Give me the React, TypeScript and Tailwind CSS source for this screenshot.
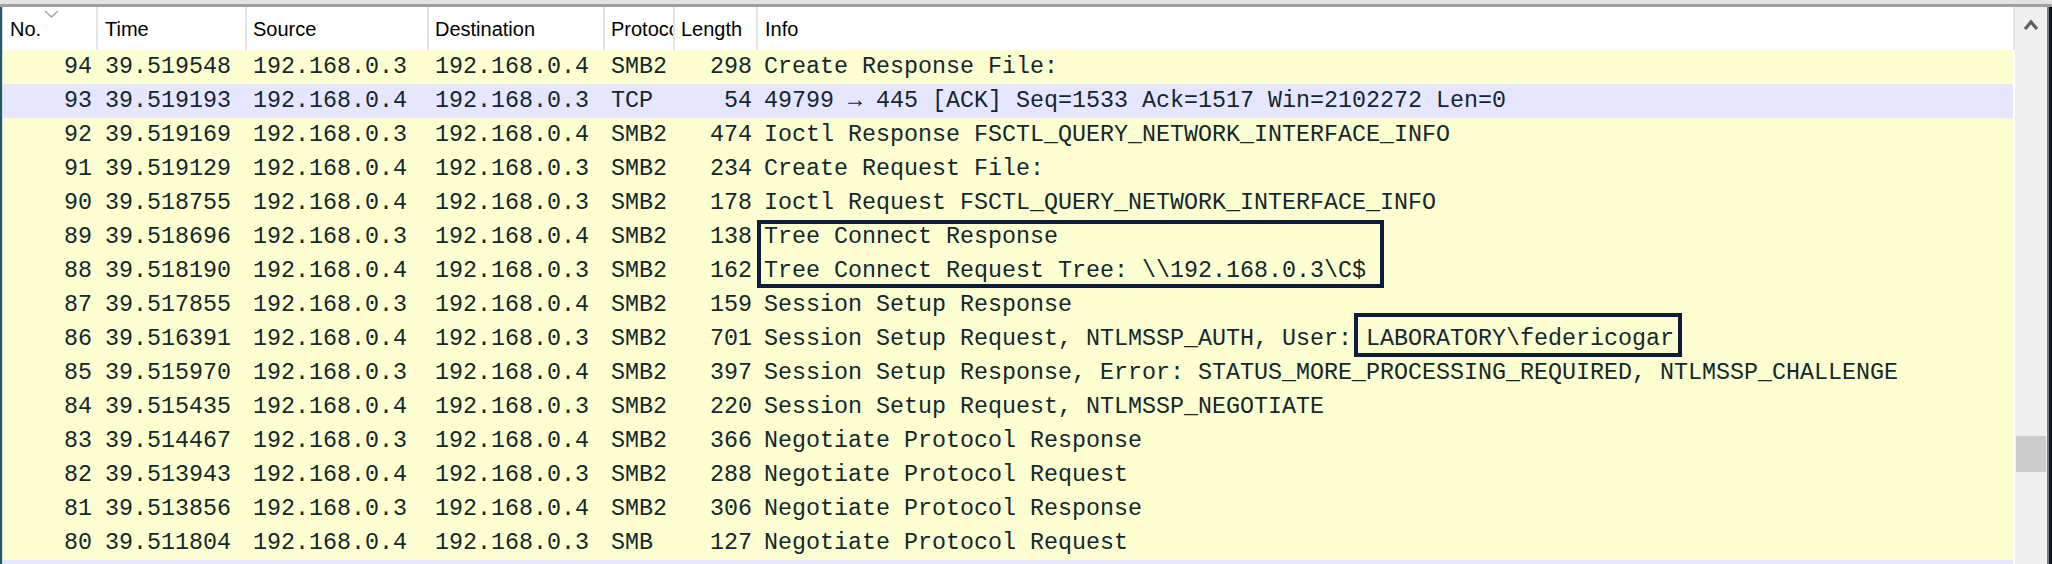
import React from "react";

type Row = { no: string; time: string; src: string; dst: string; proto: string; len: string; info: string; tcp?: boolean };

const rows: Row[] = [
  { no: "94", time: "39.519548", src: "192.168.0.3", dst: "192.168.0.4", proto: "SMB2", len: "298", info: "Create Response File:" },
  { no: "93", time: "39.519193", src: "192.168.0.4", dst: "192.168.0.3", proto: "TCP", len: "54", info: "49799 \u2192 445 [ACK] Seq=1533 Ack=1517 Win=2102272 Len=0", tcp: true },
  { no: "92", time: "39.519169", src: "192.168.0.3", dst: "192.168.0.4", proto: "SMB2", len: "474", info: "Ioctl Response FSCTL_QUERY_NETWORK_INTERFACE_INFO" },
  { no: "91", time: "39.519129", src: "192.168.0.4", dst: "192.168.0.3", proto: "SMB2", len: "234", info: "Create Request File:" },
  { no: "90", time: "39.518755", src: "192.168.0.4", dst: "192.168.0.3", proto: "SMB2", len: "178", info: "Ioctl Request FSCTL_QUERY_NETWORK_INTERFACE_INFO" },
  { no: "89", time: "39.518696", src: "192.168.0.3", dst: "192.168.0.4", proto: "SMB2", len: "138", info: "Tree Connect Response" },
  { no: "88", time: "39.518190", src: "192.168.0.4", dst: "192.168.0.3", proto: "SMB2", len: "162", info: "Tree Connect Request Tree: \\\\192.168.0.3\\C$" },
  { no: "87", time: "39.517855", src: "192.168.0.3", dst: "192.168.0.4", proto: "SMB2", len: "159", info: "Session Setup Response" },
  { no: "86", time: "39.516391", src: "192.168.0.4", dst: "192.168.0.3", proto: "SMB2", len: "701", info: "Session Setup Request, NTLMSSP_AUTH, User: LABORATORY\\federicogar" },
  { no: "85", time: "39.515970", src: "192.168.0.3", dst: "192.168.0.4", proto: "SMB2", len: "397", info: "Session Setup Response, Error: STATUS_MORE_PROCESSING_REQUIRED, NTLMSSP_CHALLENGE" },
  { no: "84", time: "39.515435", src: "192.168.0.4", dst: "192.168.0.3", proto: "SMB2", len: "220", info: "Session Setup Request, NTLMSSP_NEGOTIATE" },
  { no: "83", time: "39.514467", src: "192.168.0.3", dst: "192.168.0.4", proto: "SMB2", len: "366", info: "Negotiate Protocol Response" },
  { no: "82", time: "39.513943", src: "192.168.0.4", dst: "192.168.0.3", proto: "SMB2", len: "288", info: "Negotiate Protocol Request" },
  { no: "81", time: "39.513856", src: "192.168.0.3", dst: "192.168.0.4", proto: "SMB2", len: "306", info: "Negotiate Protocol Response" },
  { no: "80", time: "39.511804", src: "192.168.0.4", dst: "192.168.0.3", proto: "SMB", len: "127", info: "Negotiate Protocol Request" },
];

const gridCols = "grid grid-cols-[95px_149px_182px_176px_70px_83px_1fr]";

export default function App() {
  return (
    <div className="relative w-[2052px] h-[564px] overflow-hidden flex flex-col bg-white">
      <div className="h-[4px] bg-[#e3e3e3]" />
      <div className="h-[3px] bg-[#a0a0a0]" />
      <div className="flex flex-1 min-h-0">
        <div className="w-[2px] bg-[#1e5b6b]" />
        <div className="w-[1px] bg-[#d9d9d9]" />
        {/* table */}
        <div className="w-[2010px] flex flex-col min-h-0">
          <div className={`${gridCols} h-[43px] bg-white text-black text-[20px] font-['Liberation_Sans',Arial,sans-serif]`}>
            <div className="relative flex items-center pl-[7px] border-r-2 border-[#e3e3e3]">
              No.
              <svg className="absolute left-[41px] top-[3px]" width="15" height="8" viewBox="0 0 15 8">
                <polyline points="1,1 7.5,7 14,1" fill="none" stroke="#a5a5a5" strokeWidth="1.4" />
              </svg>
            </div>
            <div className="flex items-center pl-[7px] border-r-2 border-[#e3e3e3]">Time</div>
            <div className="flex items-center pl-[6px] border-r-2 border-[#e3e3e3]">Source</div>
            <div className="flex items-center pl-[6px] border-r-2 border-[#e3e3e3]">Destination</div>
            <div className="flex items-center pl-[6px] border-r-2 border-[#e3e3e3] overflow-hidden whitespace-nowrap">Protocol</div>
            <div className="flex items-center pl-[6px] border-r-2 border-[#e3e3e3]">Length</div>
            <div className="flex items-center pl-[7px]">Info</div>
          </div>
          <div className="flex-1 min-h-0 overflow-hidden flex flex-col font-['Liberation_Mono','DejaVu_Sans_Mono',monospace] text-[23.33px] text-[#12272e]">
            {rows.map((r) => (
              <div
                key={r.no}
                className={`${gridCols} h-[34px] shrink-0 items-center whitespace-pre ${r.tcp ? "bg-[#e7e6ff]" : "bg-[#feffd0]"}`}
              >
                <div className="text-right pr-[6px]">{r.no}</div>
                <div className="pl-[7px]">{r.time}</div>
                <div className="pl-[6px]">{r.src}</div>
                <div className="pl-[6px]">{r.dst}</div>
                <div className="pl-[6px]">{r.proto}</div>
                <div className="text-right pr-[6px]">{r.len}</div>
                <div className="pl-[6px] overflow-hidden">{r.info}</div>
              </div>
            ))}
            <div className="flex-1 bg-[#e7e6ff]" />
          </div>
        </div>
        <div className="w-[2px] flex flex-col">
          <div className="h-[43px] bg-[#e3e3e3]" />
          <div className="flex-1 bg-white" />
        </div>
        {/* scrollbar */}
        <div className="w-[32px] bg-[#f0f0f0] flex flex-col">
          <div className="h-[34px] flex items-center justify-center">
            <svg width="16" height="13" viewBox="0 0 16 13">
              <polyline points="2,11 8,4 14,11" fill="none" stroke="#606060" strokeWidth="3.2" strokeLinejoin="miter" />
            </svg>
          </div>
          <div className="h-[395px]" />
          <div className="h-[36px] mx-[1px] bg-[#cdcdcd]" />
        </div>
        <div className="w-[2px] bg-[#7d7d7d]" />
        <div className="w-[3px] bg-[#0c1a1e]" />
      </div>
      {/* annotation boxes */}
      <div className="absolute left-[757px] top-[220px] w-[627px] h-[68px] border-4 border-[#0a1c40]" />
      <div className="absolute left-[1354px] top-[313px] w-[328px] h-[44px] border-4 border-[#0a1c40]" />
    </div>
  );
}
